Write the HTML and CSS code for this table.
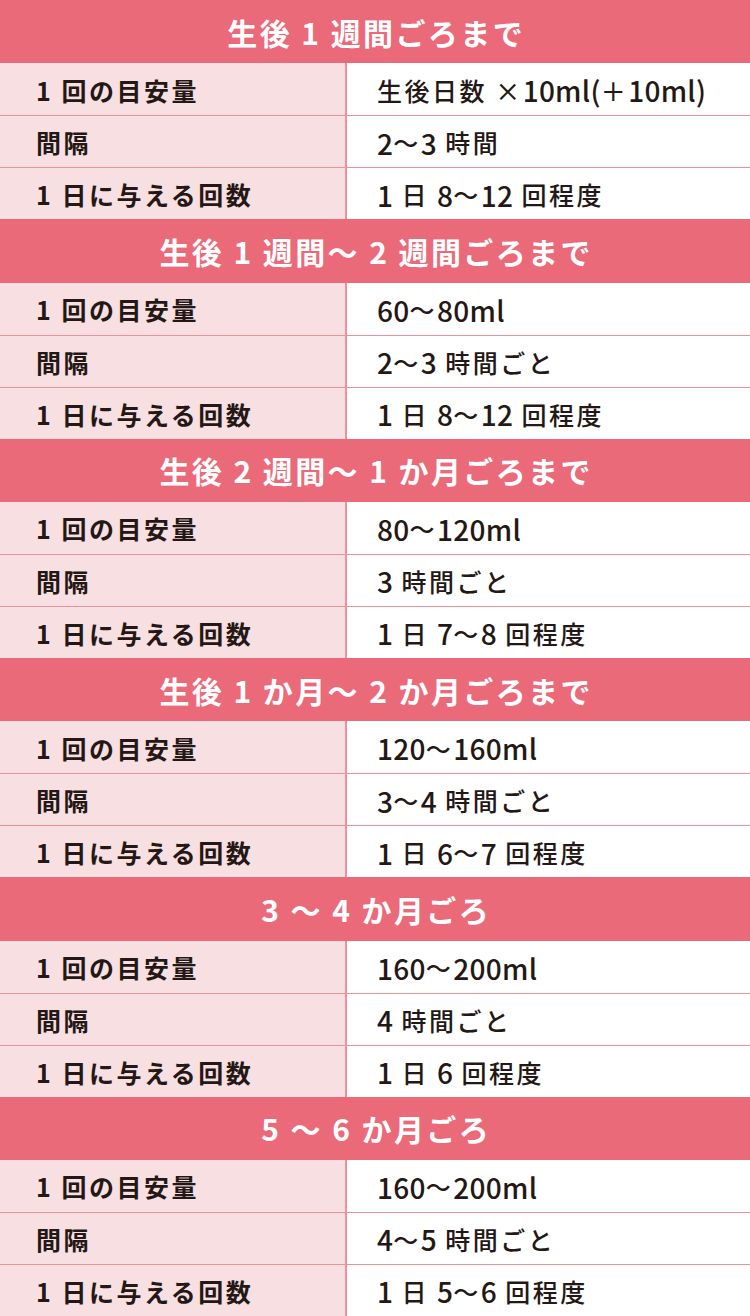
FILE: index.html
```html
<!DOCTYPE html>
<html lang="ja">
<head>
<meta charset="utf-8">
<title>授乳量の目安</title>
<link rel="stylesheet" href="styles.css">
</head>
<body>
<main class="table">
  <section class="section">
    <h2 class="head">生後 1 週間ごろまで</h2>
    <div class="row"><div class="label">1 回の目安量</div><div class="value">生後日数 ×<span class="n">10ml(</span>＋<span class="n">10ml)</span></div></div>
    <div class="row"><div class="label">間隔</div><div class="value"><span class="n">2</span>〜<span class="n">3</span> 時間</div></div>
    <div class="row"><div class="label">1 日に与える回数</div><div class="value"><span class="n">1</span> 日 <span class="n">8</span>〜<span class="n">12</span> 回程度</div></div>
  </section>
  <section class="section">
    <h2 class="head">生後 1 週間〜 2 週間ごろまで</h2>
    <div class="row"><div class="label">1 回の目安量</div><div class="value"><span class="n">60</span>〜<span class="n">80ml</span></div></div>
    <div class="row"><div class="label">間隔</div><div class="value"><span class="n">2</span>〜<span class="n">3</span> 時間ごと</div></div>
    <div class="row"><div class="label">1 日に与える回数</div><div class="value"><span class="n">1</span> 日 <span class="n">8</span>〜<span class="n">12</span> 回程度</div></div>
  </section>
  <section class="section">
    <h2 class="head">生後 2 週間〜 1 か月ごろまで</h2>
    <div class="row"><div class="label">1 回の目安量</div><div class="value"><span class="n">80</span>〜<span class="n">120ml</span></div></div>
    <div class="row"><div class="label">間隔</div><div class="value"><span class="n">3</span> 時間ごと</div></div>
    <div class="row"><div class="label">1 日に与える回数</div><div class="value"><span class="n">1</span> 日 <span class="n">7</span>〜<span class="n">8</span> 回程度</div></div>
  </section>
  <section class="section">
    <h2 class="head">生後 1 か月〜 2 か月ごろまで</h2>
    <div class="row"><div class="label">1 回の目安量</div><div class="value"><span class="n">120</span>〜<span class="n">160ml</span></div></div>
    <div class="row"><div class="label">間隔</div><div class="value"><span class="n">3</span>〜<span class="n">4</span> 時間ごと</div></div>
    <div class="row"><div class="label">1 日に与える回数</div><div class="value"><span class="n">1</span> 日 <span class="n">6</span>〜<span class="n">7</span> 回程度</div></div>
  </section>
  <section class="section">
    <h2 class="head">3 〜 4 か月ごろ</h2>
    <div class="row"><div class="label">1 回の目安量</div><div class="value"><span class="n">160</span>〜<span class="n">200ml</span></div></div>
    <div class="row"><div class="label">間隔</div><div class="value"><span class="n">4</span> 時間ごと</div></div>
    <div class="row"><div class="label">1 日に与える回数</div><div class="value"><span class="n">1</span> 日 <span class="n">6</span> 回程度</div></div>
  </section>
  <section class="section">
    <h2 class="head">5 〜 6 か月ごろ</h2>
    <div class="row"><div class="label">1 回の目安量</div><div class="value"><span class="n">160</span>〜<span class="n">200ml</span></div></div>
    <div class="row"><div class="label">間隔</div><div class="value"><span class="n">4</span>〜<span class="n">5</span> 時間ごと</div></div>
    <div class="row"><div class="label">1 日に与える回数</div><div class="value"><span class="n">1</span> 日 <span class="n">5</span>〜<span class="n">6</span> 回程度</div></div>
  </section>
</main>
</body>
</html>
```

FILE: styles.css
```css
html, body {
  margin: 0;
  padding: 0;
  background: #ffffff;
}

body {
  font-family: "Noto Sans CJK JP", "Noto Sans", sans-serif;
  color: #231815;
  width: 750px;
}

.table {
  display: flex;
  flex-direction: column;
}

.section {
  display: flex;
  flex-direction: column;
}

.head {
  margin: 0;
  height: 63.33px;
  display: flex;
  align-items: center;
  justify-content: center;
  background: #ea6a79;
  color: #ffffff;
  font-size: 30px;
  font-weight: 700;
  letter-spacing: 0.08em;
  line-height: 1;
  padding-left: 0.08em;
}

.row {
  display: grid;
  grid-template-columns: 345px 2px 1fr;
  height: 52px;
  box-sizing: border-box;
}

.row + .row {
  border-top: 1px solid #f0909b;
}

.label {
  background: #f8dfe1;
  display: flex;
  align-items: center;
  padding-left: 36px;
  padding-top: 2px;
  font-size: 25px;
  font-weight: 700;
  letter-spacing: 0.1em;
  line-height: 1;
  grid-column: 1;
}

.value {
  grid-column: 3;
  display: flex;
  align-items: center;
  white-space: pre;
  padding-left: 30px;
  padding-top: 2px;
  font-size: 25px;
  font-weight: 500;
  letter-spacing: 0.1em;
  line-height: 1;
  border-left: 2px solid #f0909b;
  margin-left: -2px;
}

.value .n {
  font-size: 28px;
  letter-spacing: 0.01em;
}
```
